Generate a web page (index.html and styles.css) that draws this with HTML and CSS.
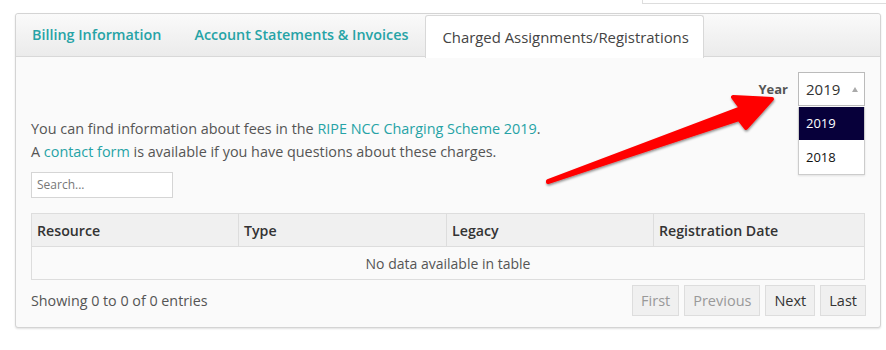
FILE: index.html
```html
<!DOCTYPE html>
<html>
<head>
<meta charset="utf-8">
<link rel="stylesheet" href="styles.css">
</head>
<body>
<div class="topbox"></div>
<div class="panel">
  <div class="tabs">
    <a class="tab">Billing Information</a>
    <a class="tab">Account Statements &amp; Invoices</a>
    <a class="tab active">Charged Assignments/Registrations</a>
  </div>
  <div class="content">
    <div class="yearrow">
      <span class="yearlabel">Year</span>
      <div class="select">
        <span class="selval">2019</span>
        <span class="caret"></span>
        <ul class="options">
          <li class="opt sel">2019</li>
          <li class="opt">2018</li>
        </ul>
      </div>
    </div>
    <p class="info">You can find information about fees in the <a class="link">RIPE NCC Charging Scheme 2019</a>.<br>A <a class="link">contact form</a> is available if you have questions about these charges.</p>
    <div class="search">Search...</div>
    <table class="grid">
      <colgroup>
        <col class="c1"><col class="c2"><col class="c3"><col class="c4">
      </colgroup>
      <thead>
        <tr><th>Resource</th><th>Type</th><th>Legacy</th><th>Registration Date</th></tr>
      </thead>
      <tbody>
        <tr><td colspan="4" class="empty">No data available in table</td></tr>
      </tbody>
    </table>
    <div class="footer">
      <span class="count">Showing 0 to 0 of 0 entries</span>
      <div class="pager">
        <span class="btn disabled">First</span>
        <span class="btn disabled">Previous</span>
        <span class="btn">Next</span>
        <span class="btn">Last</span>
      </div>
    </div>
  </div>
  <svg class="arrow" width="886" height="350" viewBox="0 0 886 350">
    <defs>
      <filter id="sh" x="-10%" y="-10%" width="120%" height="130%">
        <feDropShadow dx="0.5" dy="1.5" stdDeviation="1" flood-color="#000" flood-opacity="0.45"/>
      </filter>
    </defs>
    <polygon points="548,181 741,108 733,97 772,99 746,128 739,119 548,182" fill="#ff0000" stroke="#ff0000" stroke-width="4" stroke-linejoin="round" filter="url(#sh)"/>
  </svg>
</div>
</body>
</html>
```
FILE: styles.css
```css
* { box-sizing: border-box; }
html, body { margin: 0; padding: 0; background: #fff; }
body {
  font-family: "Open Sans", "Noto Sans", sans-serif;
  font-size: 14px;
  color: #555;
  width: 886px;
  height: 350px;
  overflow: hidden;
}
.topbox {
  margin-left: 642px;
  height: 4px;
  border-left: 1px solid #ddd;
  border-bottom: 1px solid #ddd;
}
.panel {
  margin: 9px 0 0 15px;
  width: 866px;
  border: 1px solid #d4d4d4;
  border-radius: 3px;
  background: #fafafa;
  box-shadow: 0 1px 2px rgba(0,0,0,0.12);
}
.tabs {
  display: flex;
  height: 43px;
  background: linear-gradient(#fafafa, #ebebeb);
  border-bottom: 1px solid #d8d8d8;
  border-radius: 3px 3px 0 0;
}
.tab {
  display: flex;
  align-items: center;
  padding: 0 17px 2px 16px;
  font-weight: 600;
  font-size: 14.35px;
  color: #26a3a6;
}
.tab.active {
  margin-top: 1px;
  height: 43px;
  background: #fff;
  color: #444;
  border: 1px solid #d8d8d8;
  border-bottom: none;
  border-radius: 3px 3px 0 0;
  padding: 0 14px 1px 16px;
  font-weight: 400;
  font-size: 14.9px;
}
.content {
  padding: 15px 15px 11px 15px;
}
.yearrow {
  display: flex;
  justify-content: flex-end;
  align-items: flex-start;
  height: 34px;
}
.yearlabel {
  font-weight: 700;
  font-size: 13px;
  color: #555;
  margin: 8px 10px 0 0;
}
.select {
  position: relative;
  width: 67px;
  height: 34px;
  border: 1px solid #bbb;
  background: #fff;
  display: flex;
  align-items: center;
  padding-left: 7px;
}
.selval {
  font-size: 15px;
  color: #333;
}
.caret {
  margin-left: 12px;
  width: 0;
  height: 0;
  border-left: 3.5px solid transparent;
  border-right: 3.5px solid transparent;
  border-bottom: 5px solid #aaa;
}
.options {
  position: absolute;
  left: -1px;
  top: 34px;
  width: 67px;
  margin: 0;
  padding: 0;
  list-style: none;
  background: #fff;
  border: 1px solid #ccc;
  border-top: none;
  box-shadow: 0 1px 2px rgba(0,0,0,0.1);
  z-index: 2;
}
.opt {
  height: 34px;
  line-height: 34px;
  padding-left: 7px;
  font-size: 13px;
  color: #111;
}
.opt.sel {
  height: 33px;
  line-height: 33px;
  background: #07003a;
  color: #fff;
}
.info {
  margin: 11px 0 0 0;
  line-height: 23px;
  font-size: 14.4px;
  color: #555;
}
.link { color: #26a3a6; }
.search {
  margin-top: 9px;
  width: 142px;
  height: 26px;
  border: 1px solid #d5d5d5;
  background: #fff;
  font-size: 12px;
  color: #777;
  padding: 4px 5px;
  line-height: 16px;
}
.grid {
  margin-top: 15px;
  width: 833px;
  border-collapse: collapse;
  table-layout: fixed;
}
.c1 { width: 207px; }
.c2 { width: 208px; }
.c3 { width: 207px; }
.c4 { width: 211px; }
.grid th {
  height: 33px;
  text-align: left;
  font-weight: 600;
  font-size: 14.2px;
  color: #333;
  background: #f0f0f0;
  border: 1px solid #ddd;
  padding: 0 5px;
}
.grid td {
  height: 33px;
  border: 1px solid #ddd;
  background: #fafafa;
  text-align: center;
  color: #555;
}
.footer {
  display: flex;
  justify-content: space-between;
  align-items: center;
  margin-top: 5px;
}
.count { color: #555; font-size: 14.3px; }
.pager {
  display: flex;
  gap: 5px;
  margin-right: -1px;
}
.btn {
  height: 31px;
  line-height: 29px;
  padding: 0 8px;
  border: 1px solid #ddd;
  background: #f0f0f0;
  color: #333;
  font-size: 14.5px;
}
.btn.disabled { color: #999; }
.arrow {
  position: absolute;
  left: 0;
  top: 0;
  pointer-events: none;
  z-index: 3;
}
```
